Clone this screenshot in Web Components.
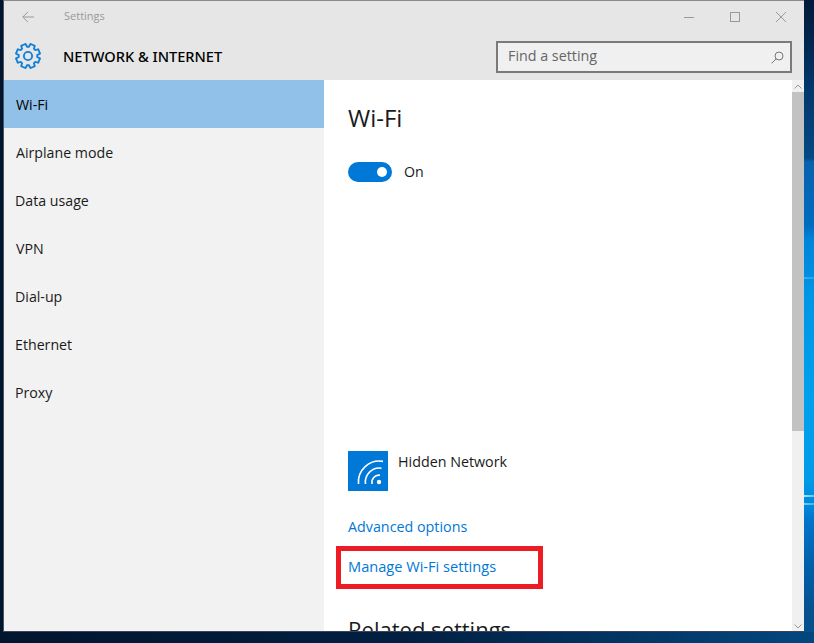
<!DOCTYPE html>
<html lang="en">
<head>
<meta charset="utf-8">
<title>Settings</title>
<style>
  html, body { margin: 0; height: 100%; overflow: hidden; }
  body { font-family: "Open Sans", "Noto Sans", sans-serif; }
</style>
</head>
<body>
<desktop-bg>
  <settings-window>
    <title-bar slot="title" label="Settings"></title-bar>
    <section-header slot="header" label="NETWORK &amp; INTERNET"></section-header>
    <side-nav slot="nav">
      <nav-item selected>Wi-Fi</nav-item>
      <nav-item>Airplane mode</nav-item>
      <nav-item style="--inset:11px">Data usage</nav-item>
      <nav-item>VPN</nav-item>
      <nav-item style="--inset:11px">Dial-up</nav-item>
      <nav-item style="--inset:11px">Ethernet</nav-item>
      <nav-item style="--inset:11px">Proxy</nav-item>
    </side-nav>
    <wifi-pane slot="main"></wifi-pane>
  </settings-window>
</desktop-bg>

<script>
function define(name, html) {
  const template = document.createElement('template');
  template.innerHTML = html;
  customElements.define(name, class extends HTMLElement {
    constructor() {
      super();
      this.attachShadow({ mode: 'open' });
      this.shadowRoot.appendChild(template.content.cloneNode(true));
    }
    connectedCallback() {
      this.shadowRoot.querySelectorAll('[data-label]').forEach((el) => {
        el.textContent = this.getAttribute('label') ?? '';
      });
      const gear = this.shadowRoot.querySelector('[data-gear]');
      if (gear) gear.setAttribute('d', gearPath());
    }
  });
}

// outline of the eight tooth gear, in a 24 box
function gearPath() {
  const pts = [];
  for (let i = 0; i < 8; i++) {
    const a = i * Math.PI / 4 + Math.PI / 8;
    [[-0.30, 8.6], [-0.19, 11.3], [0.19, 11.3], [0.30, 8.6]].forEach(([d, r]) => {
      pts.push((12 + r * Math.cos(a + d)).toFixed(2) + ' ' + (12 + r * Math.sin(a + d)).toFixed(2));
    });
  }
  return 'M' + pts.join('L') + 'Z';
}

define('desktop-bg', `
  <style>
    :host {
      display: block;
      box-sizing: border-box;
      width: 814px;
      height: 643px;
      padding: 0 10px 11px 3px;
      position: relative;
      overflow: hidden;
      background: linear-gradient(180deg,
        #021a3a 0, #02264e 40px, #02386c 90px, #044a84 158px,
        #0862ae 162px, #006cbf 225px, #0084dc 240px, #0096e6 300px,
        #00a0ee 400px, #009ae8 480px, #0088dc 506px, #0074cc 520px,
        #0060aa 565px, #06508e 615px, #06508e 643px);
    }
    .bottom {
      position: absolute;
      left: 0; right: 0; bottom: 0;
      height: 11px;
      background: linear-gradient(90deg, #02152f 0, #021f42 50%, #023462 75%, #03477f 100%);
    }
    .left {
      position: absolute;
      left: 0; top: 0; bottom: 0;
      width: 3px;
      background: #02152f;
    }
    .streak {
      position: absolute;
      left: 804px;
      width: 10px;
      height: 2px;
      background: linear-gradient(90deg, #a8e4f4, #5cc4ee);
    }
    ::slotted(*) { position: relative; z-index: 1; }
  </style>
  <div class="left"></div>
  <div class="bottom"></div>
  <div class="streak" style="top:277px;opacity:.35"></div>
  <div class="streak" style="top:495px"></div>
  <div class="streak" style="top:503px;opacity:.7"></div>
  <slot></slot>
`);

define('settings-window', `
  <style>
    :host {
      display: grid;
      grid-template-columns: 320px 1fr;
      grid-template-rows: 31px 48px 1fr;
      height: 632px;
      box-sizing: border-box;
      border-top: 1px solid #8a8a8a;
      border-left: 1px solid #4a5564;
      border-bottom: 1px solid #3a4654;
      background: #fff;
    }
    .wide { grid-column: 1 / 3; }
    .wide, .cell { display: grid; min-height: 0; min-width: 0; overflow: hidden; }
  </style>
  <div class="wide"><slot name="title"></slot></div>
  <div class="wide"><slot name="header"></slot></div>
  <div class="cell"><slot name="nav"></slot></div>
  <div class="cell"><slot name="main"></slot></div>
`);

define('title-bar', `
  <style>
    :host {
      display: flex;
      align-items: center;
      background: #e6e6e6;
      color: #999;
      font-size: 11px;
    }
    .back { width: 12px; height: 12px; margin-left: 18px; }
    .name { margin-left: 30px; position: relative; top: -1px; }
    .controls { margin-left: auto; display: flex; gap: 36px; margin-right: 18px; }
    svg { display: block; fill: none; stroke: #999; stroke-width: 1; }
    .controls svg { width: 10px; height: 10px; }
  </style>
  <svg class="back" viewBox="0 0 12 12"><path d="M12 6H.8M6 .8L.8 6 6 11.2"/></svg>
  <span class="name" data-label></span>
  <div class="controls">
    <svg viewBox="0 0 10 10"><path d="M0 5.5h10"/></svg>
    <svg viewBox="0 0 10 10"><rect x=".5" y=".5" width="9" height="9"/></svg>
    <svg viewBox="0 0 10 10"><path d="M0 0l10 10M10 0L0 10"/></svg>
  </div>
`);

define('section-header', `
  <style>
    :host {
      display: flex;
      align-items: center;
      background: #e6e6e6;
      color: #000;
      font-size: 14.6px;
      font-weight: 500;
      font-family: "Noto Sans", "Open Sans", sans-serif;
    }
    .gear { width: 26px; height: 26px; margin-left: 11px; fill: none; stroke: #0f7fd8; stroke-width: 1.7; }
    .title { margin-left: 22px; }
    .search {
      margin-left: auto;
      margin-right: 12px;
      margin-top: 2px;
      width: 296px;
      height: 32px;
      box-sizing: border-box;
      border: 2px solid #7a7a7a;
      background: #f0f0f0;
      display: flex;
      align-items: center;
      justify-content: space-between;
      padding: 0 6px 0 10px;
      color: #666;
      font-family: "Open Sans", sans-serif;
      font-size: 14.3px;
      font-weight: 400;
    }
    .search span { position: relative; top: -2px; }
    .search svg { width: 13px; height: 13px; fill: none; stroke: #777; stroke-width: 1; }
  </style>
  <svg class="gear" viewBox="0 0 24 24"><path data-gear/><circle cx="12" cy="12" r="3.8"/></svg>
  <span class="title" data-label></span>
  <div class="search"><span>Find a setting</span>
    <svg viewBox="0 0 13 13"><circle cx="8" cy="5" r="4"/><path d="M5.2 7.800L.6 12.400"/></svg>
  </div>
`);

define('side-nav', `
  <style>
    :host { display: block; background: #f2f2f2; }
  </style>
  <slot></slot>
`);

define('nav-item', `
  <style>
    :host {
      display: flex;
      align-items: center;
      height: 48px;
      padding-left: var(--inset, 12px);
      font-size: 14.2px;
      color: #1a1a1a;
    }
    :host([selected]) { background: #91c0e8; color: #000; }
  </style>
  <slot></slot>
`);

define('toggle-switch', `
  <style>
    :host { display: flex; align-items: center; gap: 12px; font-size: 14.2px; color: #1a1a1a; }
    .track {
      width: 44px; height: 20px;
      box-sizing: border-box;
      border-radius: 10px;
      background: #0078d7;
      display: flex;
      justify-content: flex-end;
      align-items: center;
      padding-right: 5px;
    }
    .knob { width: 10px; height: 10px; border-radius: 50%; background: #fff; }
    span { position: relative; top: -1px; }
  </style>
  <div class="track"><div class="knob"></div></div>
  <span><slot></slot></span>
`);

define('network-row', `
  <style>
    :host { display: flex; gap: 10px; font-size: 14.3px; color: #1a1a1a; }
    .tile { width: 40px; height: 40px; background: #0078d7; flex: none; }
    svg { display: block; fill: none; stroke: #fff; stroke-width: 1.6; }
    span { line-height: 22px; }
  </style>
  <div class="tile">
    <svg width="40" height="40" viewBox="0 0 40 40">
      <path d="M10.500 33A21 21 0 0 1 35 10.400M17.500 33A14 14 0 0 1 33.500 17.200M24.200 33A7 7 0 0 1 32 24.200"/>
      <circle cx="31" cy="31" r="2.200" fill="#fff" stroke="none"/>
    </svg>
  </div>
  <span><slot></slot></span>
`);

define('text-link', `
  <style>
    :host { display: block; color: #0078d7; font-size: var(--link-size, 14.3px); line-height: 20px; }
  </style>
  <slot></slot>
`);

define('red-callout', `
  <style>
    :host {
      display: flex;
      align-items: center;
      box-sizing: border-box;
      width: 207px;
      height: 43px;
      border: 5px solid #ed1c24;
      padding: 0 0 4px 7px;
      --link-size: 14.6px;
    }
  </style>
  <slot></slot>
`);

define('scroll-bar', `
  <style>
    :host {
      display: flex;
      flex-direction: column;
      width: 12px;
      flex: none;
      background: #f0f0f0;
    }
    .arrow { height: 12px; display: grid; place-items: center; }
    .thumb { height: 339px; background: #c2c2c2; }
    .gap { flex: 1; }
    svg { width: 8px; height: 5px; fill: none; stroke: #999; stroke-width: 1; }
  </style>
  <div class="arrow"><svg viewBox="0 0 8 5"><path d="M.5 4.500L4 1l3.500 3.500"/></svg></div>
  <div class="thumb"></div>
  <div class="gap"></div>
  <div class="arrow"><svg viewBox="0 0 8 5"><path d="M.5.5L4 4 7.500.5"/></svg></div>
`);

define('wifi-pane', `
  <style>
    :host { display: flex; background: #fff; height: 552px; overflow: hidden; }
    .content { flex: 1; padding: 22px 0 0 24px; overflow: hidden; min-width: 0; }
    h1, h2 { margin: 0; font-weight: 400; color: #1a1a1a; line-height: 32px; }
    h1 { font-size: 24px; }
    h2 { font-size: 22px; margin-top: 24px; }
    toggle-switch { margin-top: 28px; }
    .spacer { height: 269px; }
    .advanced { margin-top: 26px; }
    red-callout { margin: 9px 0 0 -12px; }
  </style>
  <div class="content">
    <h1>Wi-Fi</h1>
    <toggle-switch>On</toggle-switch>
    <div class="spacer"></div>
    <network-row>Hidden Network</network-row>
    <text-link class="advanced">Advanced options</text-link>
    <red-callout><text-link>Manage Wi-Fi settings</text-link></red-callout>
    <h2>Related settings</h2>
  </div>
  <scroll-bar></scroll-bar>
`);
</script>
</body>
</html>
